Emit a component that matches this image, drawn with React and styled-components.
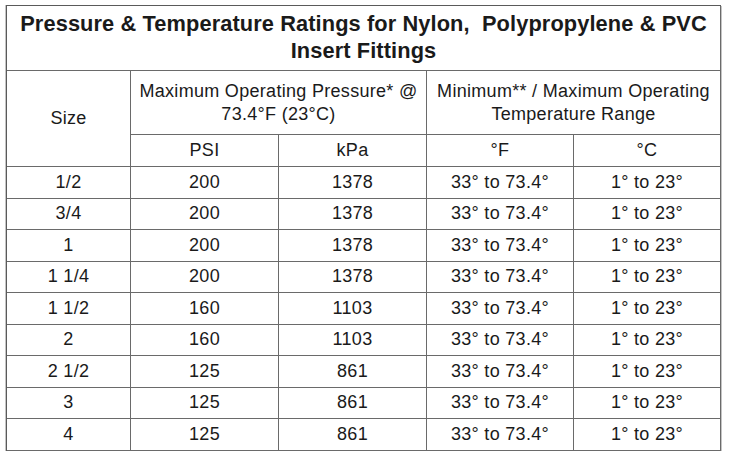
import React from "react";
import styled, { createGlobalStyle } from "styled-components";

const GlobalStyle = createGlobalStyle`
  html, body {
    margin: 0;
    padding: 0;
    background: #ffffff;
  }
  body {
    font-family: "Liberation Sans", Arial, sans-serif;
    color: #1a1a1a;
  }
`;

const Page = styled.div`
  padding: 5px 0 0 6px;
`;

const Grid = styled.div`
  display: grid;
  grid-template-columns: 124px 148px 148px 147px 147px;
  grid-template-rows: 65px 64px 32px repeat(9, 31.5px);
  width: max-content;
  border-top: 1px solid #5a5a5a;
  border-left: 1px solid #5a5a5a;
  box-shadow: -1px 0 0 #c4c4c4, 1px 1px 0 #c4c4c4;
`;

const Cell = styled.div`
  display: flex;
  align-items: center;
  justify-content: center;
  text-align: center;
  box-sizing: border-box;
  border-right: 1px solid #6a6a6a;
  border-bottom: 1px solid #6a6a6a;
  font-size: 18px;
  letter-spacing: 0.3px;
  line-height: 23px;
  grid-column: ${(p) => p.$col || "auto"};
  grid-row: ${(p) => p.$row || "auto"};
`;

const TitleCell = styled(Cell)`
  font-weight: 700;
  font-size: 21.8px;
  letter-spacing: 0.1px;
  line-height: 27px;
  padding: 0 4px 2px;
  white-space: pre-wrap;
`;

const GroupCell = styled(Cell)`
  padding: 0 6px;
`;

const data = [
  ["1/2", "200", "1378"],
  ["3/4", "200", "1378"],
  ["1", "200", "1378"],
  ["1 1/4", "200", "1378"],
  ["1 1/2", "160", "1103"],
  ["2", "160", "1103"],
  ["2 1/2", "125", "861"],
  ["3", "125", "861"],
  ["4", "125", "861"],
];

export default function App() {
  return (
    <>
      <GlobalStyle />
      <Page>
        <Grid>
          <TitleCell $col="1 / 6">
            {"Pressure & Temperature Ratings for Nylon,  Polypropylene & PVC Insert Fittings"}
          </TitleCell>
          <Cell $col="1" $row="2 / 4">Size</Cell>
          <GroupCell $col="2 / 4">Maximum Operating Pressure* @ 73.4°F (23°C)</GroupCell>
          <GroupCell $col="4 / 6">Minimum** / Maximum Operating Temperature Range</GroupCell>
          <Cell>PSI</Cell>
          <Cell>kPa</Cell>
          <Cell>°F</Cell>
          <Cell>°C</Cell>
          {data.map(([size, psi, kpa]) => (
            <React.Fragment key={size}>
              <Cell>{size}</Cell>
              <Cell>{psi}</Cell>
              <Cell>{kpa}</Cell>
              <Cell>33° to 73.4°</Cell>
              <Cell>1° to 23°</Cell>
            </React.Fragment>
          ))}
        </Grid>
      </Page>
    </>
  );
}
